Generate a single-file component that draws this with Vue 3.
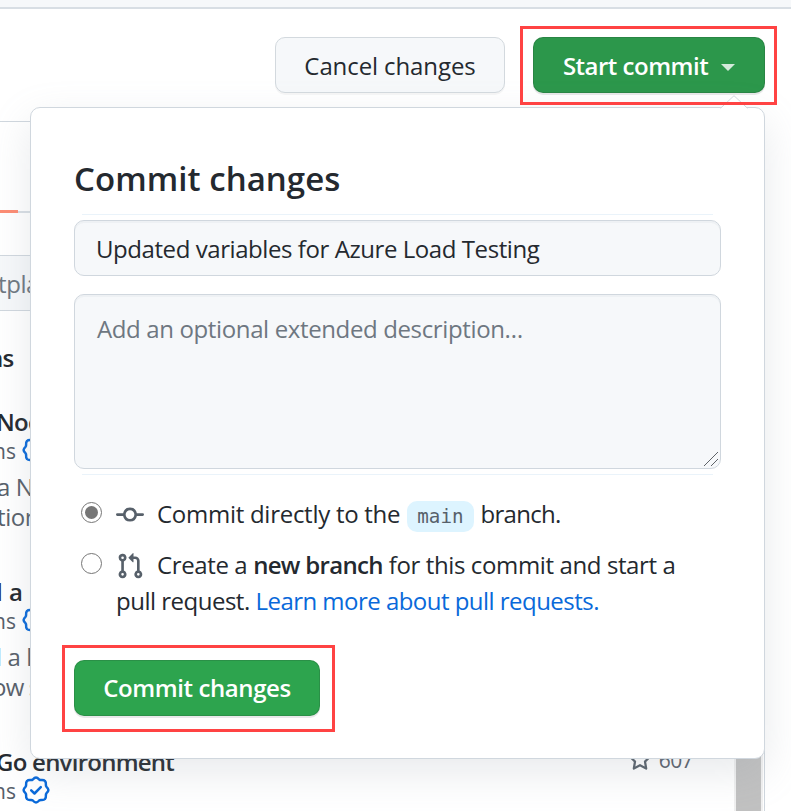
<script setup>
import { ref } from 'vue'

const summary = ref('Updated variables for Azure Load Testing')
const description = ref('')
const target = ref('direct')

const listings = [
  { name: 'Nod', by: 'ns', lines: ['a N', 'tion'], kind: 'node' },
  { name: 'l a', by: 'ns', lines: ['l a l', 'ow s'], kind: 'java' },
  { name: 'Go environment', by: 'ns', lines: [], kind: 'go', stars: 607 },
]
</script>

<template>
  <div class="page">
    <div class="topbar"></div>

    <div class="toolbar">
      <button class="btn cancel">Cancel changes</button>
      <div class="marked">
        <button class="btn primary start">
          <span>Start commit</span><i class="caret"></i>
        </button>
        <span class="ring ring-start"></span>
      </div>
    </div>

    <div class="panel">
      <div class="tabs"><span class="tab-active"></span></div>
      <div class="gap"></div>
      <div class="search"><span>tpla</span></div>
      <div class="heading">ns</div>
      <article v-for="item in listings" :key="item.kind" class="listing" :class="item.kind">
        <div class="row">
          <h4>{{ item.name }}</h4>
          <div v-if="item.stars" class="stars">
            <svg width="24" height="24" viewBox="0 0 16 16" fill="currentColor">
              <path fill-rule="evenodd" d="M8 .25a.75.75 0 01.673.418l1.882 3.815 4.21.612a.75.75 0 01.416 1.279l-3.046 2.97.719 4.192a.75.75 0 01-1.088.791L8 12.347l-3.766 1.98a.75.75 0 01-1.088-.79l.72-4.194L.818 6.374a.75.75 0 01.416-1.28l4.21-.611L7.327.668A.75.75 0 018 .25zm0 2.445L6.615 5.5a.75.75 0 01-.564.41l-3.097.45 2.24 2.184a.75.75 0 01.216.664l-.528 3.084 2.769-1.456a.75.75 0 01.698 0l2.77 1.456-.53-3.084a.75.75 0 01.216-.664l2.24-2.183-3.096-.45a.75.75 0 01-.564-.41L8 2.694z" />
            </svg>
            <span>{{ item.stars }}</span>
          </div>
        </div>
        <div class="by">
          <span>{{ item.by }}</span>
          <svg width="28" height="28" viewBox="0 0 28 28" fill="none" stroke="#0969da" stroke-width="2.5" stroke-linejoin="round" stroke-linecap="round">
            <path d="M14 1.6 Q15.4 1.6 17.2 3.5 Q18 4.2 19.2 4.1 Q22 3.9 23 5 Q24.1 6 23.9 8.8 Q23.8 10 24.5 10.8 Q26.4 12.6 26.4 14 Q26.4 15.4 24.5 17.2 Q23.8 18 23.9 19.2 Q24.1 22 23 23 Q22 24.1 19.2 23.9 Q18 23.8 17.2 24.5 Q15.4 26.4 14 26.4 Q12.6 26.4 10.8 24.5 Q10 23.8 8.8 23.9 Q6 24.1 5 23 Q3.9 22 4.1 19.2 Q4.2 18 3.5 17.2 Q1.6 15.4 1.6 14 Q1.6 12.6 3.5 10.8 Q4.2 10 4.1 8.8 Q3.9 6 5 5 Q6 3.9 8.8 4.1 Q10 4.2 10.8 3.5 Q12.6 1.6 14 1.6Z" />
            <path d="M9.2 14.4 L12.5 17.5 L18.8 11.2" />
          </svg>
        </div>
        <p v-for="line in item.lines" :key="line">{{ line }}</p>
      </article>
    </div>
    <div class="scrollbar"></div>

    <form class="popover" @submit.prevent>
      <svg class="pointer" width="28" height="15" viewBox="0 0 28 15">
        <path d="M0 13.5 L14 0.7 L28 13.5 V15 H0Z" fill="#fff" />
        <path d="M0.5 13.3 L14 0.7 L27.5 13.3" fill="none" stroke="#d0d7de" />
      </svg>
      <h2>Commit changes</h2>
      <div class="rule"></div>
      <input v-model="summary" class="field summary" type="text" />
      <div class="area">
        <textarea v-model="description" class="field description" placeholder="Add an optional extended description…"></textarea>
        <svg class="grip" width="16" height="16" viewBox="0 0 16 16" fill="none" stroke="#5f6368" stroke-width="1">
          <path d="M1 15 L15 1 M8 15 L15 8" />
        </svg>
      </div>
      <div class="rule lower"></div>

      <label class="option direct">
        <input v-model="target" type="radio" value="direct" />
        <span class="text">
          <svg class="icon" width="28" height="28" viewBox="0 0 16 16" fill="currentColor">
            <path fill-rule="evenodd" d="M10.5 7.75a2.5 2.5 0 11-5 0 2.5 2.5 0 015 0zm1.43.75a4.002 4.002 0 01-7.86 0H.75a.75.75 0 110-1.5h3.32a4.001 4.001 0 017.86 0h3.32a.75.75 0 110 1.5h-3.32z" />
          </svg>
          <span class="t-direct">Commit directly to the</span>
          <code>main</code>
          <span class="t-branch">branch.</span>
        </span>
      </label>

      <label class="option create">
        <input v-model="target" type="radio" value="branch" />
        <span class="stack">
          <span class="text">
            <svg class="icon" width="28" height="28" viewBox="0 0 16 16" fill="currentColor">
              <path fill-rule="evenodd" d="M7.177 3.073L9.573.677A.25.25 0 0110 .854v4.792a.25.25 0 01-.427.177L7.177 3.427a.25.25 0 010-.354zM3.75 2.5a.75.75 0 100 1.5.75.75 0 000-1.5zm-2.25.75a2.25 2.25 0 113 2.122v5.256a2.251 2.251 0 11-1.5 0V5.372A2.25 2.25 0 011.5 3.25zM11 2.5h-1V4h1a1 1 0 011 1v5.628a2.251 2.251 0 101.5 0V5A2.5 2.5 0 0011 2.5zm1 10.25a.75.75 0 111.5 0 .75.75 0 01-1.5 0zM3.75 12a.75.75 0 100 1.5.75.75 0 000-1.5z" />
            </svg>
            <span class="t-create">Create a <b>new branch</b> for this commit and start a</span>
          </span>
          <span class="text t-pull">pull request.&nbsp;<a>Learn more about pull requests.</a></span>
        </span>
      </label>

      <div class="marked submit">
        <button class="btn primary commit">Commit changes</button>
        <span class="ring ring-commit"></span>
      </div>
    </form>
  </div>
</template>

<style>
body {
  margin: 0;
  overflow: hidden;
}
</style>

<style scoped>
* {
  box-sizing: border-box;
}
.page {
  position: relative;
  width: 791px;
  height: 811px;
  overflow: hidden;
  background: #fff;
  color: #24292f;
  font: 400 24px/36px "Open Sans", "Noto Sans", sans-serif;
}
.topbar {
  height: 9px;
  background: #f6f8fa;
  border-bottom: 2px solid #d8dee4;
}
.toolbar {
  display: flex;
  align-items: flex-start;
  justify-content: flex-end;
  gap: 28px;
  height: 112px;
  padding: 28px 26px 0 0;
}
.btn {
  display: flex;
  align-items: center;
  justify-content: center;
  height: 56px;
  padding: 1px 0 0;
  border: 1px solid #d3d9de;
  border-radius: 10px;
  background: #f6f8fa;
  color: #24292f;
  font: 500 24px/36px "Open Sans", sans-serif;
  box-shadow: 0 2px 0 rgba(27, 31, 36, 0.04);
}
.cancel {
  width: 230px;
  letter-spacing: -0.1px;
}
.btn.primary {
  border-color: rgba(27, 31, 36, 0.15);
  background: #2da44e;
  color: #fff;
  font-weight: 600;
  letter-spacing: -0.4px;
  box-shadow: 0 2px 0 rgba(27, 31, 36, 0.1);
}
.btn.start {
  width: 232px;
  gap: 13px;
  background: #2c974b;
  letter-spacing: -0.5px;
}
.btn.commit {
  width: 246px;
  padding: 0 0 1px;
}
.caret {
  margin-top: 3px;
  border: 7px solid transparent;
  border-top-color: rgba(255, 255, 255, 0.8);
  border-bottom: 0;
}
.marked {
  position: relative;
}
.ring {
  position: absolute;
  z-index: 5;
  border: 3px solid #ff4343;
  pointer-events: none;
}
.ring-start {
  inset: -11px -12px -12px -13px;
}
.ring-commit {
  inset: -15px -15px -16px -12px;
}
.panel {
  width: 765px;
  height: 690px;
  overflow: hidden;
  border: solid #d0d7de;
  border-width: 1px 1px 0 0;
}
.tabs {
  display: flex;
  align-items: flex-end;
  height: 91px;
  border-bottom: 2px solid #d8dee4;
}
.tab-active {
  width: 18px;
  height: 3px;
  margin-bottom: -2px;
  background: #fd8c73;
}
.gap {
  height: 42px;
}
.search {
  height: 56px;
  padding: 10px 0 0 0;
  margin-left: -3px;
  border: 1px solid #d0d7de;
  background: #f6f8fa;
  color: #6e7781;
  letter-spacing: -0.4px;
}
.heading {
  height: 30px;
  margin: 32px 0 0 -12px;
  font-weight: 600;
  line-height: 30px;
  letter-spacing: -0.7px;
}
.listing {
  height: 126px;
  margin-bottom: 44px;
}
.listing.node {
  margin-top: 34px;
}
.row {
  display: flex;
  justify-content: space-between;
  height: 30px;
}
h4 {
  margin: 0 0 0 -4px;
  font-weight: 600;
  font-size: 24px;
  line-height: 30px;
  letter-spacing: -0.75px;
}
.java h4 {
  letter-spacing: 0;
}
.stars {
  display: flex;
  align-items: center;
  gap: 7px;
  height: 28px;
  margin: -1px 71px 0 0;
  color: #57606a;
  font-size: 21px;
  line-height: 28px;
  letter-spacing: -0.6px;
}
.by {
  display: flex;
  align-items: center;
  gap: 6px;
  height: 28px;
  margin: -1px 0 1px -7px;
  color: #57606a;
  font-size: 21px;
  line-height: 28px;
}
.by span {
  margin-top: 2px;
}
.listing p {
  margin: 0 0 0 -3px;
  color: #57606a;
  line-height: 30px;
  letter-spacing: -0.4px;
}
.by + p {
  margin-top: 8px;
}
.java p {
  margin-left: -4px;
}
.java p:last-child {
  margin-left: -8px;
  letter-spacing: -0.8px;
}
.scrollbar {
  position: absolute;
  top: 700px;
  left: 734px;
  width: 29px;
  height: 111px;
  border: solid #f0f0f0;
  border-width: 0 2px;
  background: #c1c1c1;
}
.popover {
  position: absolute;
  top: 107px;
  left: 30px;
  width: 735px;
  height: 652px;
  padding: 49px 43px 0;
  border: 1px solid #d0d7de;
  border-radius: 10px;
  background: #fff;
  box-shadow: 0 14px 42px rgba(140, 149, 159, 0.2);
}
.pointer {
  position: absolute;
  top: -13px;
  right: 16px;
}
h2 {
  margin: 0 0 13px;
  font-weight: 600;
  font-size: 33px;
  line-height: 44px;
  letter-spacing: 0.05px;
}
.rule {
  height: 1px;
  margin: 0 8px 5px;
  background: #eaf3fa;
}
.field {
  display: block;
  width: 647px;
  margin: 0;
  border: 1px solid #d0d7de;
  border-radius: 10px;
  outline: 0;
  background: #f6f8fa;
  color: #24292f;
  font: 400 24px/36px "Open Sans", sans-serif;
  box-shadow: inset 0 2px 0 rgba(208, 215, 222, 0.2);
}
.summary {
  height: 56px;
  padding: 0 21px 0;
  letter-spacing: -0.43px;
}
.area {
  position: relative;
  margin-top: 18px;
}
.description {
  height: 175px;
  padding: 16px 22px;
  letter-spacing: -0.37px;
  resize: none;
}
.description::placeholder {
  color: #6e7781;
}
.grip {
  position: absolute;
  right: 2px;
  bottom: 2px;
}
.rule.lower {
  margin: 5px 8px 21px;
}
.option {
  display: flex;
  align-items: flex-start;
}
.option input {
  flex: none;
  appearance: none;
  display: grid;
  place-items: center;
  width: 21px;
  height: 21px;
  margin: 6px 14px 0 7px;
  border: 1.5px solid #767676;
  border-radius: 50%;
}
.option input:checked::before {
  content: "";
  width: 13px;
  height: 13px;
  border-radius: 50%;
  background: #767676;
}
.text {
  display: flex;
  height: 36px;
  white-space: nowrap;
}
.icon {
  flex: none;
  margin: 5px 13px 0 0;
  color: #57606a;
}
.t-direct {
  letter-spacing: -0.27px;
}
.t-branch {
  margin-left: 7px;
  letter-spacing: -0.7px;
}
code {
  height: 31px;
  margin: 5px 0 0 7px;
  padding: 0 10px;
  border-radius: 10px;
  background: #ddf4ff;
  color: #57606a;
  font: 400 19.2px/31px "DejaVu Sans Mono", monospace;
}
.create {
  margin-top: 15px;
}
.t-create {
  letter-spacing: -0.38px;
}
.t-create b {
  font-weight: 600;
  letter-spacing: -0.68px;
}
.t-pull {
  letter-spacing: -0.5px;
}
.t-pull a {
  color: #0969da;
  letter-spacing: -0.53px;
}
.submit {
  width: 246px;
  margin-top: 41px;
}
</style>
